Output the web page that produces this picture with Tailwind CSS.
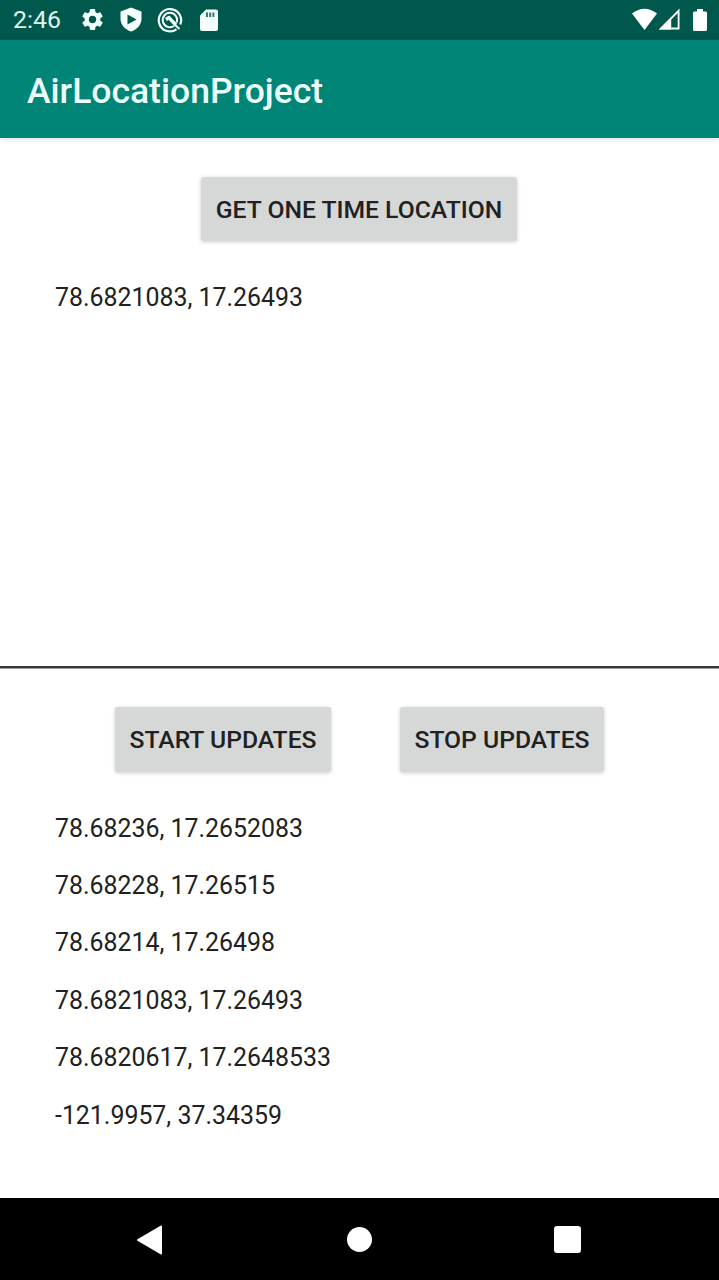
<!DOCTYPE html>
<html lang="en">
<head>
<meta charset="utf-8">
<title>AirLocationProject</title>
<script src="https://cdn.jsdelivr.net/npm/@tailwindcss/browser@4"></script>
</head>
<body class="w-[719px] h-[1280px] overflow-hidden flex flex-col bg-white font-[Roboto,sans-serif] text-[24.9px] text-[#212121]">
  <div class="h-10 shrink-0 bg-[#00574b] flex items-center text-[#f2fffb]">
    <span class="ml-[13px] w-[67px] text-[24.8px] leading-10 text-[#e0f4ee]">2:46</span>
    <svg class="size-[25px] -mt-px" viewBox="0 0 24 24" fill="currentColor"><path d="M19.43 12.98c.04-.32.07-.64.07-.98s-.03-.66-.07-.98l2.11-1.65c.19-.15.24-.42.12-.64l-2-3.46c-.12-.22-.39-.3-.61-.22l-2.49 1c-.52-.4-1.08-.73-1.69-.98l-.38-2.65C14.46 2.18 14.25 2 14 2h-4c-.25 0-.46.18-.49.42l-.38 2.65c-.61.25-1.17.59-1.69.98l-2.49-1c-.23-.09-.49 0-.61.22l-2 3.46c-.13.22-.07.49.12.64l2.11 1.65c-.04.32-.07.65-.07.98s.03.66.07.98l-2.11 1.65c-.19.15-.24.42-.12.64l2 3.46c.12.22.39.3.61.22l2.49-1c.52.4 1.08.73 1.69.98l.38 2.65c.03.24.24.42.49.42h4c.25 0 .46-.18.49-.42l.38-2.65c.61-.25 1.17-.59 1.69-.98l2.49 1c.23.09.49 0 .61-.22l2-3.46c.12-.22.07-.49-.12-.64l-2.11-1.65zM12 15.500A3.500 3.500 0 1 1 12 8.500a3.500 3.500 0 0 1 0 7z"/></svg>
    <svg class="ml-[14px] -mt-px w-6 h-[25px]" viewBox="0 0 24 25"><path fill="currentColor" d="M12 .5 22.500 4.500v7.500c0 5.800-4.500 10.500-10.500 12.500C6 22.500 1.500 17.800 1.500 12V4.500z"/><path fill="#00574b" d="M8.500 7.500 17.500 12.500 8.500 17.500z"/></svg>
    <svg class="ml-[14px] -mt-px size-[26px]" viewBox="0 0 26 26" fill="none" stroke="currentColor"><path stroke-width="2.200" d="M19.500 22.300A11.200 11.200 0 1 1 23.300 17.500"/><path stroke-width="2" d="M17 19A7.200 7.200 0 1 1 19.700 15.500"/><path stroke-width="3.400" stroke-linejoin="round" d="m9 12.500 3-2 2.500 3 4.500 4.500"/><path stroke-width="2" d="m18 18 4.500 4"/></svg>
    <svg class="ml-[16px] -mt-px w-5 h-6" viewBox="0 0 20 24"><path fill="currentColor" d="M7 1.500h10a2 2 0 0 1 2 2v17.500a2 2 0 0 1-2 2H3a2 2 0 0 1-2-2V7.500z"/><path fill="#00574b" fill-opacity=".8" d="M7 4.500h2v4.500H7zM10.200 4.500h2v4.500h-2zM13.400 4.500h2v4.500h-2z"/></svg>
    <div class="ml-auto mr-[11px] -mt-px flex items-center text-white">
      <svg class="w-[27px] h-[23px]" viewBox="0 0 27 23" fill="currentColor"><path d="M0 5.500Q12.500-4 25 5.500L12.500 22z"/></svg>
      <svg class="w-[23px] h-[23px]" viewBox="0 0 23 23"><path fill="none" stroke="currentColor" stroke-width="1.800" d="M2 20.500H19.600V2.800z"/><path fill="currentColor" d="M0 21.500 12.200 9.200V21.500z"/></svg>
      <svg class="ml-[10px] w-[16px] h-6" viewBox="0 0 16 24" fill="currentColor"><path d="M5 1h6v2.500h2.500A1.500 1.500 0 0 1 15 5v16.500a1.500 1.500 0 0 1-1.500 1.500h-11A1.500 1.500 0 0 1 1 21.500V5a1.500 1.500 0 0 1 1.500-1.500H5z"/></svg>
    </div>
  </div>
  <header class="z-10 h-[98px] shrink-0 bg-[#008577] px-[27px] flex items-center shadow-[0_1px_6px_rgba(0,0,0,0.15)]">
    <h1 class="text-[35.500px] font-medium leading-10 text-[#ecfffa] pt-[3px]">AirLocationProject</h1>
  </header>
  <main class="flex flex-col h-[1059.500px] shrink-0">
    <section class="h-[528px] shrink-0 pt-[39px] flex flex-col">
      <button class="ml-[201px] w-[316px] h-[64px] pt-0.5 rounded-[3px] bg-[#d6d7d7] text-[24.700px] font-medium shadow-[0_1px_4px_rgba(0,0,0,0.2)] whitespace-nowrap">GET ONE TIME LOCATION</button>
      <p class="mt-[28px] ml-[55px] h-[57.500px] leading-[57.500px]">78.6821083, 17.26493</p>
    </section>
    <div class="h-[3px] shrink-0 bg-[#383838] border-b border-[#a0a0a0]"></div>
    <section class="flex flex-col pt-[38px]">
      <div class="flex pl-[115px] gap-[69px] text-[24.700px]">
        <button class="w-[216px] h-[65px] pt-px rounded-[3px] bg-[#d6d7d7] font-medium shadow-[0_1px_4px_rgba(0,0,0,0.2)] whitespace-nowrap">START UPDATES</button>
        <button class="w-[204px] h-[65px] pt-px rounded-[3px] bg-[#d6d7d7] font-medium shadow-[0_1px_4px_rgba(0,0,0,0.2)] whitespace-nowrap">STOP UPDATES</button>
      </div>
      <div class="mt-[27.500px] pl-[55px] leading-[57.400px]">
        <p>78.68236, 17.2652083</p>
        <p>78.68228, 17.26515</p>
        <p>78.68214, 17.26498</p>
        <p>78.6821083, 17.26493</p>
        <p>78.6820617, 17.2648533</p>
        <p>-121.9957, 37.34359</p>
      </div>
    </section>
  </main>
  <nav class="flex-1 bg-black flex items-center pt-[2px] pl-[136px] text-white">
    <svg class="w-[27px] h-[30px]" viewBox="0 0 27 30" fill="currentColor" stroke="currentColor" stroke-width="2" stroke-linejoin="round"><path d="M2 15 25 1.500V28.500z"/></svg>
    <div class="ml-[184px] size-[25px] rounded-full bg-white"></div>
    <div class="ml-[182px] size-[27px] rounded-[3px] bg-white"></div>
  </nav>
</body>
</html>
